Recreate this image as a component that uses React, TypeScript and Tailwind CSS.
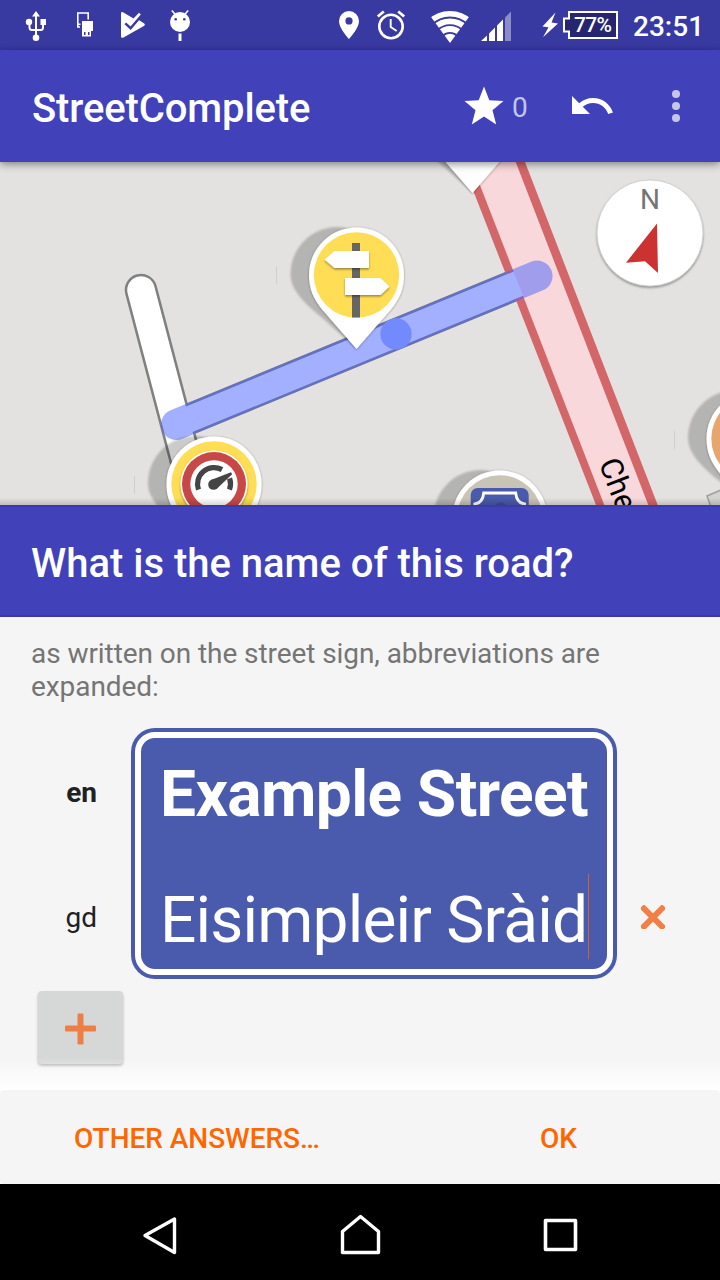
import type { ReactNode } from 'react';

function Glyph({ box, className, children }: { box: string; className: string; children: ReactNode }) {
  return (
    <svg viewBox={box} className={`block shrink-0 overflow-visible ${className}`} fill="white">
      {children}
    </svg>
  );
}

function StatusBar() {
  return (
    <header className="flex h-[50px] shrink-0 items-start bg-[#3939a2] text-white">
      <Glyph box="24 0 24 50" className="ml-6 h-[50px] w-6">
        <path d="M36 11l4 5.500h-8zM35 15h2v22h-2z" />
        <path d="M29.500 22v5.500q0 2.500 2.500 2.500h8.500q2.500 0 2.500-2.500V22" fill="none" stroke="white" strokeWidth="2" />
        <circle cx="29" cy="22" r="3.200" />
        <circle cx="36" cy="37.700" r="3.300" />
        <path d="M40.500 19h5.500v6h-5.500z" />
      </Glyph>
      <Glyph box="76 0 18 50" className="ml-[28px] h-[50px] w-[18px]">
        <path d="M80 27h-2.200V13h10.400v6.500" fill="none" stroke="white" strokeWidth="1.600" />
        <path d="M82 21h11v10h-2v5.500h-9zM84 32v3h1.500v-3zM88 32v3h1.500v-3z" fillRule="evenodd" />
        <path d="M77 23.500h3.500v1.500H77z" />
      </Glyph>
      <Glyph box="121 0 24 50" className="ml-[27px] h-[50px] w-6">
        <path d="M121 13.500q0-2 2-1.200L133.500 18.500 139 12.800 141 14.800 138 19.500 144.300 23.500q1.200 1.200 0 2.300L123 37.700q-2 .5-2-1.500z" />
        <path d="M125.300 23.300l5.300 4.900L141.500 15.500" fill="none" stroke="#3939a2" strokeWidth="2.400" />
      </Glyph>
      <Glyph box="170 0 20 50" className="ml-[25px] h-[50px] w-5">
        <circle cx="180" cy="22" r="10" />
        <path d="M171.800 10.500l4 4.500M188.200 10.500l-4 4.500" stroke="white" strokeWidth="1.600" />
        <path d="M178.500 33.500h3V41h-3z" />
        <circle cx="175.700" cy="19.200" r="1.300" fill="#3939a2" />
        <circle cx="184.300" cy="19.200" r="1.300" fill="#3939a2" />
      </Glyph>

      <Glyph box="339 0 20 50" className="ml-auto h-[50px] w-5">
        <path
          fillRule="evenodd"
          d="M349 11a10 10 0 0 0-10 10c0 7.500 10 18 10 18s10-10.500 10-18a10 10 0 0 0-10-10zm0 6.300a3.600 3.600 0 1 1 0 7.200 3.600 3.600 0 0 1 0-7.200z"
        />
      </Glyph>
      <Glyph box="377 0 28 50" className="ml-[18px] h-[50px] w-7">
        <circle cx="391" cy="26.500" r="11.700" fill="none" stroke="white" strokeWidth="2.600" />
        <path d="M377.800 16.500l6-5M404.200 16.500l-6-5" stroke="white" strokeWidth="2.800" />
        <path d="M390.700 19v8l6 4" fill="none" stroke="white" strokeWidth="1.900" />
      </Glyph>
      <Glyph box="430 0 40 50" className="ml-[25px] h-[50px] w-10">
        <clipPath id="wifi-fan">
          <path d="M450 43L428.500 13.500V0h43v13.500z" />
        </clipPath>
        <g clipPath="url(#wifi-fan)" fill="none" stroke="white">
          <circle cx="450" cy="43" r="29.200" strokeWidth="5.600" />
          <circle cx="450" cy="43" r="21.700" strokeWidth="5.800" />
          <circle cx="450" cy="43" r="14" strokeWidth="5.800" />
          <circle cx="450" cy="43" r="9.200" fill="white" stroke="none" />
        </g>
      </Glyph>
      <Glyph box="481 0 30 50" className="ml-[11px] h-[50px] w-[30px]">
        <path d="M481 41l6-5.500V41zM489 33.500l6-6V41h-6zM497 25.500l6-6V41h-6z" />
        <path d="M505 17.500l6-6V41h-6z" opacity=".42" />
      </Glyph>
      <Glyph box="542 0 16 50" className="ml-[31px] h-[50px] w-4">
        <path d="M555.500 12.500L542.500 26.500l6 .8-5.500 10L558 23.500l-6.500-1z" />
      </Glyph>
      <div className="relative ml-[5px] h-[50px] w-[55px]">
        <svg viewBox="563 0 55 50" className="block h-[50px] w-[55px]">
          <path d="M569 12h48v26h-48v-6.500h-5V18.500h5z" fill="#262570" stroke="white" strokeWidth="2" />
        </svg>
        <span className="absolute top-[13px] left-[11px] text-[21px] leading-6 font-medium tracking-[-0.7px]">77%</span>
      </div>
      <span className="mt-[11px] mr-4 ml-[15px] w-[71px] text-[28px] leading-8 font-medium">23:51</span>
    </header>
  );
}

function AppBar() {
  return (
    <div className="relative z-10 flex h-28 shrink-0 items-center bg-[#4141ba] pl-8 text-white shadow-[0_2px_8px_rgba(0,0,0,0.45)]">
      <h1 className="mt-[6px] text-[40px] leading-[48px] font-medium tracking-[-0.12px]">StreetComplete</h1>
      <Glyph box="464 86 40 39" className="ml-auto h-[39px] w-10">
        <path d="M484 85.500l5.300 13.700 14.200.8-11 9.300 3.700 14.200-12.200-8-12.200 8 3.700-14.200-11-9.300 14.200-.8z" />
      </Glyph>
      <span className="mt-[3px] ml-2 w-[18px] text-[28px] leading-8 text-white/70">0</span>
      <Glyph box="0 0 24 24" className="ml-[38px] h-12 w-12">
        <path d="M12.500 8c-2.650 0-5.050.99-6.900 2.600L2 7v9h9l-3.620-3.620c1.390-1.160 3.160-1.880 5.120-1.880 3.540 0 6.550 2.310 7.600 5.500l2.370-.78C21.080 11.030 17.150 8 12.500 8z" />
      </Glyph>
      <div className="mr-10 ml-14 flex flex-col gap-1">
        <i className="block size-2 rounded-full bg-white/70" />
        <i className="block size-2 rounded-full bg-white/70" />
        <i className="block size-2 rounded-full bg-white/70" />
      </div>
    </div>
  );
}

function Pin({ x, y, color, children }: { x: number; y: number; color: string; children?: ReactNode }) {
  return (
    <g transform={`translate(${x} ${y})`}>
      <path
        d="M0 74L-34 43C-54 27-66 14-66-1A47 47 0 0 1-19-48C0-48 28-30 28 0z"
        fill="#000"
        opacity=".2"
        filter="url(#soft)"
      />
      <path
        d="M0 74L-34 35C-43 24-47.500 14-47.500 0A47.500 47.500 0 0 1 47.500 0C47.500 14 43 24 34 35z"
        fill="white"
        filter="url(#edge)"
      />
      <circle r="42.700" fill={color} />
      {children}
    </g>
  );
}

function MapView() {
  return (
    <div className="h-[343px] shrink-0 overflow-hidden bg-[#e3e2e0]">
      <svg viewBox="0 162 720 343" className="block h-[343px] w-[720px]">
        <defs>
          <filter id="soft" x="-20%" y="-20%" width="140%" height="140%">
            <feGaussianBlur stdDeviation="1.200" />
          </filter>
          <filter id="edge" x="-20%" y="-20%" width="140%" height="140%">
            <feDropShadow dx="0" dy="0.500" stdDeviation="1" floodOpacity=".4" />
          </filter>
          <filter id="lift" x="-20%" y="-30%" width="140%" height="170%">
            <feDropShadow dx="0" dy="1.500" stdDeviation="0.800" floodOpacity=".4" />
          </filter>
          <linearGradient id="fade" x1="0" y1="0" x2="0" y2="1">
            <stop offset="0" stopColor="#000" stopOpacity="0" />
            <stop offset="1" stopColor="#000" stopOpacity=".16" />
          </linearGradient>
        </defs>

        <path d="M707 496l14-6v20h-9z" fill="#d3d3d2" stroke="#a0a0a0" strokeWidth="1.500" />
        <g fill="none" strokeLinecap="round">
          <path d="M141 290L191.500 482" stroke="#808080" strokeWidth="32.500" />
          <path d="M176.500 424.500L537 276" stroke="#808080" strokeWidth="31.500" />
        </g>
        <path d="M462 162H525L657.700 505H596z" fill="#d26668" />
        <g fill="none" stroke="white" strokeLinecap="round">
          <path d="M141 290L191.500 482" strokeWidth="27.500" />
          <path d="M176.500 424.500L537 276" strokeWidth="26" />
        </g>
        <path d="M471 162H515.700L648.300 505H604.300z" fill="#f8d8da" />
        <path d="M176.500 424.500L537 276" stroke="#4761ff" strokeOpacity=".5" strokeWidth="31" strokeLinecap="round" />
        <circle cx="396" cy="334" r="15.700" fill="#738aff" />

        <text
          transform="translate(598.500 463) rotate(68.800)"
          fontSize="31"
          fill="#000"
          fontFamily="Roboto, sans-serif"
        >
          Che
        </text>

        <path d="M276.500 266v18M134.500 476v18M674.500 431v18" stroke="#d0cfcd" strokeWidth="1" />

        <Pin x={472.500} y={119} color="#ffdd55" />
        <Pin x={356.500} y={275} color="#ffdd55">
          <path d="M-4.500-32H3.500V42.500H-4.500z" fill="#666" />
          <path d="M12.500-24V-7H-22L-32-15.500-22-24zM-11.500 3H24L33 11.500 24 20H-11.500z" fill="white" filter="url(#lift)" />
        </Pin>
        <Pin x={214} y={484} color="#ffdd55">
          <circle r="33.500" fill="white" filter="url(#lift)" />
          <circle r="32" fill="#c84848" />
          <circle r="23.700" fill="white" />
          <path d="M-15.500 5.600A16.500 16.500 0 0 1 8-14.400" fill="none" stroke="#444" strokeWidth="5.200" />
          <path d="M15.600-5.600A16.500 16.500 0 0 1 15.500 5.600" fill="none" stroke="#444" strokeWidth="5.200" />
          <path d="M-3-4L17-11.700 18.200-9.700 2.500 5z" fill="#444" />
          <circle cx="-.5" cy=".5" r="5.300" fill="#444" />
        </Pin>
        <Pin x={499.700} y={518} color="#c9c5b6">
          <rect x="-29" y="-30" width="58" height="50" rx="7" fill="#4a5aac" />
          <path d="M-25-14Q-17-15-16-25H16Q17-15 25-14V12H-25z" fill="none" stroke="white" strokeWidth="2.800" />
          <ellipse cx="1" cy="-12.500" rx="5" ry="3" fill="#3f4c9b" />
        </Pin>
        <Pin x={754} y={438.500} color="#e8a66f" />

        <g>
          <circle cx="650" cy="233" r="53" fill="white" stroke="#bbb" strokeWidth=".6" filter="url(#lift)" />
          <text x="650" y="209" textAnchor="middle" fontSize="28" fill="#757575" fontFamily="Roboto, sans-serif">
            N
          </text>
          <path d="M657 223.500L658 273 645 261.300 626 262.700z" fill="#cd3232" />
        </g>
        <rect x="0" y="498" width="720" height="7" fill="url(#fade)" />
      </svg>
    </div>
  );
}

function Sign() {
  return (
    <div className="h-[251px] w-[486px] rounded-[24px] bg-[#4a5aac] p-1">
      <div className="h-full rounded-[20px] border-[6px] border-white pl-[19px] whitespace-nowrap text-white">
        <div className="pt-[17px] text-[64px] leading-[80px] font-bold tracking-[-0.6px]">Example Street</div>
        <div className="mt-[36px] flex items-center">
          <span className="w-[428px] shrink-0 text-[64px] leading-[100px] tracking-[-0.81px]">Eisimpleir Sràid</span>
          <i className="-mt-[9px] block h-[85px] w-px shrink-0 bg-[#d0622c]" />
        </div>
      </div>
    </div>
  );
}

function AnswerForm() {
  return (
    <main className="flex h-[473px] shrink-0 flex-col bg-[#f5f5f5]">
      <p className="h-[111px] pt-5 pl-[31px] text-[28px] leading-[33px] tracking-[-0.07px] text-[#757575]">
        as written on the street sign, abbreviations are
        <br />
        expanded:
      </p>
      <div className="flex">
        <div className="flex w-[131px] flex-col pr-[34px] text-right text-[28px] leading-8 text-[#212121]">
          <span className="mt-[49px] font-bold">en</span>
          <span className="mt-[93px]">gd</span>
        </div>
        <Sign />
        <svg viewBox="641.5 905 24 24" className="mt-[177px] ml-6 block size-6">
          <path d="M644.500 908.500l18 18M662.500 908.500l-18 18" stroke="#f08048" strokeWidth="6" strokeLinecap="square" strokeLinejoin="round" />
        </svg>
      </div>
      <button className="mt-3 ml-[38px] flex h-[73px] w-[85px] shrink-0 items-center justify-center rounded-[4px] bg-[#d6d8d7] shadow-[0_2px_3px_rgba(0,0,0,0.28)]">
        <svg viewBox="0 0 32 32" className="mt-[2px] size-8">
          <rect x="12.500" y=".5" width="6" height="31" rx="1.200" fill="#ee7e48" />
          <rect x="0" y="12.500" width="31" height="6" rx="1.200" fill="#ee7e48" />
        </svg>
      </button>
      <div className="relative -mt-[6px] h-8 shrink-0 bg-linear-to-b from-white/0 to-white" />
    </main>
  );
}

export default function App() {
  return (
    <div className="flex h-[1280px] w-[720px] flex-col overflow-hidden bg-white font-['Roboto',sans-serif]">
      <StatusBar />
      <AppBar />
      <MapView />
      <h2 className="h-28 shrink-0 border-y-2 border-[#3a3aaa] bg-[#4141ba] pt-[33px] pl-[31px] text-[40px] leading-[48px] font-medium tracking-[-0.01px] text-white">
        What is the name of this road?
      </h2>
      <AnswerForm />
      <div className="flex h-[94px] shrink-0 items-center rounded-[4px] bg-[#f5f5f5] text-[28px] leading-8 font-medium text-[#ff6600]">
        <button className="ml-[74px] pt-1 tracking-[-0.03px]">OTHER ANSWERS…</button>
        <button className="mr-[143px] ml-auto pt-1">OK</button>
      </div>
      <nav className="flex h-24 shrink-0 items-center bg-black pt-[6px]">
        <svg viewBox="140 1212 40 46" className="ml-[140px] block h-[46px] w-10" fill="none" stroke="white" strokeWidth="3.400" strokeLinejoin="round">
          <path d="M145 1235.500L174.500 1219V1252.500z" />
        </svg>
        <svg viewBox="340 1212 42 46" className="ml-40 block h-[46px] w-[42px]" fill="none" stroke="white" strokeWidth="3.400" strokeLinejoin="round">
          <path d="M342.500 1252.500V1231.500L360.500 1216.500 378.500 1231.500V1252.500z" />
        </svg>
        <svg viewBox="542 1212 38 46" className="ml-40 block h-[46px] w-[38px]" fill="none" stroke="white" strokeWidth="3.600" strokeLinejoin="round">
          <path d="M545.500 1220.500h30v29h-30z" />
        </svg>
      </nav>
    </div>
  );
}
